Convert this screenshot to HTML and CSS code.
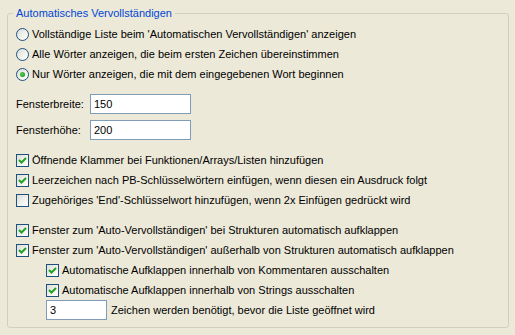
FILE: index.html
```html
<!DOCTYPE html>
<html lang="de">
<head>
    <meta charset="UTF-8">
    <title>Automatisches Vervollständigen</title>
    <link rel="stylesheet" href="styles.css">
</head>
<body>
    <fieldset class="group">
        <legend>Automatisches Vervollständigen</legend>

        <div class="radios">
            <div class="row"><span class="radio"></span>Vollständige Liste beim 'Automatischen Vervollständigen' anzeigen</div>
            <div class="row"><span class="radio"></span>Alle Wörter anzeigen, die beim ersten Zeichen übereinstimmen</div>
            <div class="row"><span class="radio checked"></span>Nur Wörter anzeigen, die mit dem eingegebenen Wort beginnen</div>
        </div>

        <div class="sizes">
            <div class="field"><label>Fensterbreite:</label><input class="text wide" type="text" value="150"></div>
            <div class="field"><label>Fensterhöhe:</label><input class="text wide" type="text" value="200"></div>
        </div>

        <div class="checks">
            <div class="row"><span class="check on"><svg width="11" height="11" viewBox="0 0 11 11"><path d="M2 5 L4.5 7.5 L9 3" /></svg></span>Öffnende Klammer bei Funktionen/Arrays/Listen hinzufügen</div>
            <div class="row"><span class="check on"><svg width="11" height="11" viewBox="0 0 11 11"><path d="M2 5 L4.5 7.5 L9 3" /></svg></span>Leerzeichen nach PB-Schlüsselwörtern einfügen, wenn diesen ein Ausdruck folgt</div>
            <div class="row"><span class="check"></span>Zugehöriges 'End'-Schlüsselwort hinzufügen, wenn 2x Einfügen gedrückt wird</div>
        </div>

        <div class="checks">
            <div class="row"><span class="check on"><svg width="11" height="11" viewBox="0 0 11 11"><path d="M2 5 L4.5 7.5 L9 3" /></svg></span>Fenster zum 'Auto-Vervollständigen' bei Strukturen automatisch aufklappen</div>
            <div class="row"><span class="check on"><svg width="11" height="11" viewBox="0 0 11 11"><path d="M2 5 L4.5 7.5 L9 3" /></svg></span>Fenster zum 'Auto-Vervollständigen' außerhalb von Strukturen automatisch aufklappen</div>
            <div class="sub">
                <div class="row"><span class="check on"><svg width="11" height="11" viewBox="0 0 11 11"><path d="M2 5 L4.5 7.5 L9 3" /></svg></span>Automatische Aufklappen innerhalb von Kommentaren ausschalten</div>
                <div class="row"><span class="check on"><svg width="11" height="11" viewBox="0 0 11 11"><path d="M2 5 L4.5 7.5 L9 3" /></svg></span>Automatische Aufklappen innerhalb von Strings ausschalten</div>
                <div class="field"><input class="text small" type="text" value="3"><span class="after">Zeichen werden benötigt, bevor die Liste geöffnet wird</span></div>
            </div>
        </div>
    </fieldset>
</body>
</html>
```

FILE: styles.css
```css
body {
    margin: 0;
    background-color: #ece9d8;
    font-family: "Liberation Sans", Arial, sans-serif;
    font-size: 11px;
    color: #000;
}
.group {
    box-sizing: border-box;
    width: 502px;
    height: 322px;
    margin: 6px 0 0 7px;
    padding: 0 8px;
    border: 1px solid #d0d0bf;
    border-radius: 3px;
}
.group legend {
    margin-left: -3px;
    padding: 0 3px;
    line-height: 14px;
    color: #0046d5;
}
.row {
    display: flex;
    align-items: center;
    height: 20px;
    white-space: nowrap;
}
.radios {
    margin-top: 4px;
}
.radio {
    box-sizing: border-box;
    position: relative;
    width: 13px;
    height: 13px;
    margin-right: 3px;
    border: 1px solid #1c5180;
    border-radius: 50%;
    background: linear-gradient(135deg, #dcdcd7 0%, #f3f3ef 60%, #fff 100%);
}
.radio.checked::after {
    content: "";
    position: absolute;
    left: 3px;
    top: 3px;
    width: 5px;
    height: 5px;
    border-radius: 50%;
    background: radial-gradient(circle at 40% 40%, #55d24e, #21a121 70%);
}
.check {
    box-sizing: border-box;
    display: flex;
    width: 13px;
    height: 13px;
    margin-right: 3px;
    border: 1px solid #1c5180;
    background: linear-gradient(135deg, #dcdcd7 0%, #f3f3ef 60%, #fff 100%);
}
.check svg path {
    fill: none;
    stroke: #21a121;
    stroke-width: 2;
}
.sizes {
    display: flex;
    flex-direction: column;
    gap: 6px;
    margin-top: 10px;
}
.field {
    display: flex;
    align-items: center;
    height: 20px;
}
.field label {
    width: 74px;
}
.text {
    box-sizing: border-box;
    height: 20px;
    padding: 0 3px;
    border: 1px solid #7f9db9;
    background: #fff;
    font-family: "Liberation Sans", Arial, sans-serif;
    font-size: 11px;
    color: #000;
    outline: none;
}
.text.wide {
    width: 101px;
}
.text.small {
    width: 61px;
    margin-right: 4px;
}
.checks {
    margin-top: 10px;
}
.sub {
    padding-left: 30px;
}
```
